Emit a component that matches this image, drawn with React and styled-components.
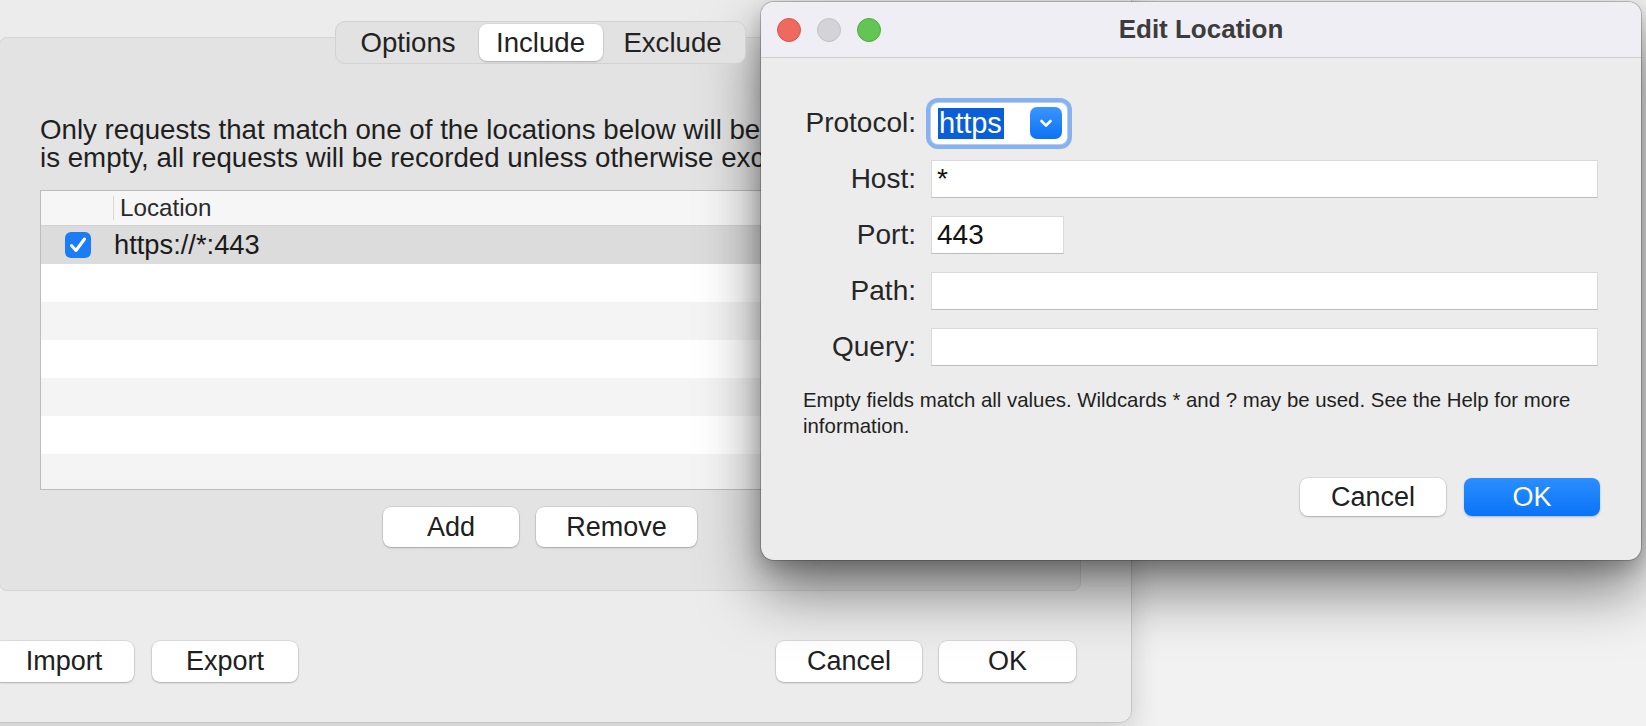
import React from "react";
import styled, { createGlobalStyle } from "styled-components";

const GlobalStyle = createGlobalStyle`
  html, body {
    margin: 0;
    padding: 0;
  }
  body {
    width: 1646px;
    height: 726px;
    overflow: hidden;
    font-family: "Liberation Sans", Arial, sans-serif;
    color: #1f1f1f;
    -webkit-font-smoothing: antialiased;
  }
`;

const Desktop = styled.div`
  position: relative;
  width: 1646px;
  height: 726px;
  overflow: hidden;
  background: #f2f2f2;
`;

/* ---------- main (parent) window ---------- */

const MainWindow = styled.section`
  position: absolute;
  left: -51px;
  top: -30px;
  width: 1183px;
  height: 753px;
  box-sizing: border-box;
  display: flex;
  flex-direction: column;
  padding: 50px 50px 0 49px;
  background: #ececec;
  border: 1px solid #c6c6c6;
  border-radius: 0 0 12px 12px;
  box-shadow: 0 10px 30px rgba(0, 0, 0, 0.16);
`;

const TabBar = styled.div`
  display: flex;
  justify-content: center;
  margin-bottom: -27px;
  position: relative;
  z-index: 1;
`;

const Segmented = styled.div`
  display: flex;
  height: 43px;
  box-sizing: border-box;
  padding: 2px;
  background: #e2e2e2;
  border: 1px solid #d2d2d2;
  border-radius: 10px;
`;

const Segment = styled.div`
  width: ${(p) => p.$w}px;
  display: flex;
  align-items: center;
  justify-content: center;
  font-size: 27.6px;
  color: #222;
  border-radius: 8px;
  background: ${(p) => (p.$active ? "#ffffff" : "transparent")};
  box-shadow: ${(p) =>
    p.$active ? "0 0 0 0.5px rgba(0,0,0,0.08), 0 1px 2px rgba(0,0,0,0.2)" : "none"};
`;

const GroupBox = styled.div`
  height: 554px;
  box-sizing: border-box;
  display: flex;
  flex-direction: column;
  padding: 78px 40px 0 40px;
  background: #e3e3e3;
  border: 1px solid #d4d4d4;
  border-radius: 8px;
`;

const Intro = styled.p`
  margin: 0;
  font-size: 27.7px;
  line-height: 28px;
  white-space: nowrap;

  span {
    display: block;
  }
`;

const TableBox = styled.div`
  margin-top: 18px;
  width: 1000px;
  height: 300px;
  box-sizing: border-box;
  overflow: hidden;
  background: #ffffff;
  border: 1px solid #bcbcbc;
`;

const HeaderRow = styled.div`
  display: grid;
  grid-template-columns: 72px 1fr;
  height: 34px;
  align-items: center;
  background: #f6f6f6;
  border-bottom: 1px solid #d2d2d2;
`;

const HeaderCell = styled.div`
  height: 24px;
  display: flex;
  align-items: center;
  font-size: 24.2px;
  color: #2a2a2a;
  padding-left: 6px;
  border-left: ${(p) => (p.$divider ? "1px solid #d8d8d8" : "none")};
`;

const Row = styled.div`
  display: grid;
  grid-template-columns: 72px 1fr;
  align-items: center;
  height: 38px;
  background: ${(p) => (p.$selected ? "#dcdcdc" : p.$odd ? "#f4f4f4" : "#ffffff")};
`;

const CheckCell = styled.div`
  display: flex;
  justify-content: center;
  padding-left: 2px;
`;

const LocationCell = styled.div`
  font-size: 27.3px;
  padding-left: 1px;
  color: #1a1a1a;
`;

const ButtonRow = styled.div`
  display: flex;
  justify-content: center;
  gap: 17px;
  margin-top: 17px;
`;

const Group = styled.div`
  display: flex;
  gap: ${(p) => p.$gap || 17}px;
`;

const PushButton = styled.div`
  width: ${(p) => p.$w}px;
  height: ${(p) => p.$h || 40}px;
  display: flex;
  align-items: center;
  justify-content: center;
  box-sizing: border-box;
  font-size: 27px;
  color: ${(p) => (p.$primary ? "#ffffff" : "#202020")};
  background: ${(p) =>
    p.$primary ? "linear-gradient(180deg, #2b8eff 0%, #0a74f6 100%)" : "#ffffff"};
  border-radius: 8px;
  box-shadow: ${(p) =>
    p.$primary
      ? "0 1px 2px rgba(0,60,160,0.3)"
      : "0 0 0 0.5px rgba(0,0,0,0.14), 0 1px 2px rgba(0,0,0,0.22)"};
`;

const BottomBar = styled.div`
  display: flex;
  justify-content: space-between;
  margin: 50px 5px 0 -5px;
`;

/* ---------- dialog ---------- */

const Dialog = styled.section`
  position: absolute;
  left: 761px;
  top: 2px;
  width: 880px;
  height: 558px;
  display: flex;
  flex-direction: column;
  overflow: hidden;
  background: #ececec;
  border-radius: 13px;
  box-shadow: 0 0 0 1px rgba(0, 0, 0, 0.2), 0 30px 60px rgba(0, 0, 0, 0.5),
    0 8px 20px rgba(0, 0, 0, 0.2);
`;

const TitleBar = styled.header`
  display: grid;
  grid-template-columns: 1fr auto 1fr;
  align-items: center;
  height: 55px;
  padding: 0 16px;
  background: #f0eef5;
  border-bottom: 1px solid #cfcfcf;
`;

const Lights = styled.div`
  display: flex;
  gap: 16px;
`;

const Light = styled.span`
  width: 24px;
  height: 24px;
  box-sizing: border-box;
  border-radius: 50%;
  background: ${(p) => p.$c};
  border: 1px solid ${(p) => p.$b};
`;

const Title = styled.h1`
  margin: 0;
  font-size: 26px;
  font-weight: 700;
  color: #3c3c3c;
`;

const Form = styled.div`
  display: grid;
  grid-template-columns: 115px 1fr;
  grid-auto-rows: 38px;
  column-gap: 15px;
  row-gap: 18px;
  align-items: center;
  padding: 46px 43px 0 40px;
`;

const Label = styled.label`
  text-align: right;
  font-size: 28px;
  color: #262626;
`;

const Field = styled.div`
  width: ${(p) => (p.$w ? `${p.$w}px` : "auto")};
  height: 38px;
  box-sizing: border-box;
  display: flex;
  align-items: center;
  padding-left: 5px;
  font-size: 28px;
  color: #111;
  background: #ffffff;
  border: 1px solid #dadada;
  border-bottom-color: #bdbdbd;
`;

const Popup = styled.div`
  width: 136px;
  height: 41px;
  box-sizing: border-box;
  display: flex;
  align-items: center;
  justify-content: space-between;
  padding: 0 5px 0 7px;
  background: #ffffff;
  border-radius: 7px;
  box-shadow: 0 0 0 1px #b9cdec, 0 0 0 5px #86b2f0;
`;

const Selected = styled.span`
  font-size: 29px;
  line-height: 31px;
  padding: 0 2px 0 1px;
  color: #ffffff;
  background: #0a5fd8;
`;

const Arrow = styled.span`
  width: 32px;
  height: 32px;
  display: flex;
  align-items: center;
  justify-content: center;
  border-radius: 7px;
  background: linear-gradient(180deg, #3a95ff 0%, #0c72f3 100%);
`;

const Help = styled.p`
  margin: 21px 43px 0 42px;
  font-size: 20.4px;
  line-height: 26px;
  color: #1f1f1f;
`;

const DialogButtons = styled.div`
  margin-top: auto;
  display: flex;
  justify-content: flex-end;
  gap: 18px;
  padding: 0 41px 44px 0;
`;

const CheckBox = () => (
  <svg width="26" height="26" viewBox="0 0 26 26">
    <rect x="0" y="0" width="26" height="26" rx="6" fill="#1b7cf6" />
    <path
      d="M6.5 13.5 L11 18.5 L19.5 7"
      fill="none"
      stroke="#ffffff"
      strokeWidth="3"
      strokeLinecap="round"
      strokeLinejoin="round"
    />
  </svg>
);

const Chevron = () => (
  <svg width="18" height="18" viewBox="0 0 18 18">
    <path
      d="M4.5 7 L9 11.5 L13.5 7"
      fill="none"
      stroke="#ffffff"
      strokeWidth="2.6"
      strokeLinecap="round"
      strokeLinejoin="round"
    />
  </svg>
);

const rows = [
  { checked: true, location: "https://*:443" },
  {},
  {},
  {},
  {},
  {},
  {},
];

const fields = [
  { label: "Host:", value: "*" },
  { label: "Port:", value: "443", w: 133 },
  { label: "Path:", value: "" },
  { label: "Query:", value: "" },
];

export default function App() {
  return (
    <>
      <GlobalStyle />
      <Desktop>
        <MainWindow>
          <TabBar>
            <Segmented>
              <Segment $w={141}>Options</Segment>
              <Segment $w={124} $active>
                Include
              </Segment>
              <Segment $w={140}>Exclude</Segment>
            </Segmented>
          </TabBar>

          <GroupBox>
            <Intro>
              <span>
                Only requests that match one of the locations below will be recorded. If the list
              </span>
              <span>is empty, all requests will be recorded unless otherwise excluded.</span>
            </Intro>

            <TableBox>
              <HeaderRow>
                <HeaderCell />
                <HeaderCell $divider>Location</HeaderCell>
              </HeaderRow>
              {rows.map((r, i) => (
                <Row key={i} $selected={r.checked} $odd={i % 2 === 0}>
                  <CheckCell>{r.checked && <CheckBox />}</CheckCell>
                  <LocationCell>{r.location}</LocationCell>
                </Row>
              ))}
            </TableBox>

            <ButtonRow>
              <PushButton $w={136}>Add</PushButton>
              <PushButton $w={161}>Remove</PushButton>
            </ButtonRow>
          </GroupBox>

          <BottomBar>
            <Group $gap={18}>
              <PushButton $w={140} $h={41}>
                Import
              </PushButton>
              <PushButton $w={146} $h={41}>
                Export
              </PushButton>
            </Group>
            <Group $gap={17}>
              <PushButton $w={146} $h={41}>
                Cancel
              </PushButton>
              <PushButton $w={137} $h={41}>
                OK
              </PushButton>
            </Group>
          </BottomBar>
        </MainWindow>

        <Dialog>
          <TitleBar>
            <Lights>
              <Light $c="#ee6a5f" $b="#d5574c" />
              <Light $c="#d4d3d8" $b="#c2c1c6" />
              <Light $c="#62c554" $b="#50aa43" />
            </Lights>
            <Title>Edit Location</Title>
            <span />
          </TitleBar>

          <Form>
            <Label>Protocol:</Label>
            <div>
              <Popup>
                <Selected>https</Selected>
                <Arrow>
                  <Chevron />
                </Arrow>
              </Popup>
            </div>
            {fields.map((f) => (
              <React.Fragment key={f.label}>
                <Label>{f.label}</Label>
                <Field $w={f.w}>{f.value}</Field>
              </React.Fragment>
            ))}
          </Form>

          <Help>
            Empty fields match all values. Wildcards * and ? may be used. See the Help for more
            information.
          </Help>

          <DialogButtons>
            <PushButton $w={146} $h={38}>
              Cancel
            </PushButton>
            <PushButton $w={136} $h={38} $primary>
              OK
            </PushButton>
          </DialogButtons>
        </Dialog>
      </Desktop>
    </>
  );
}
